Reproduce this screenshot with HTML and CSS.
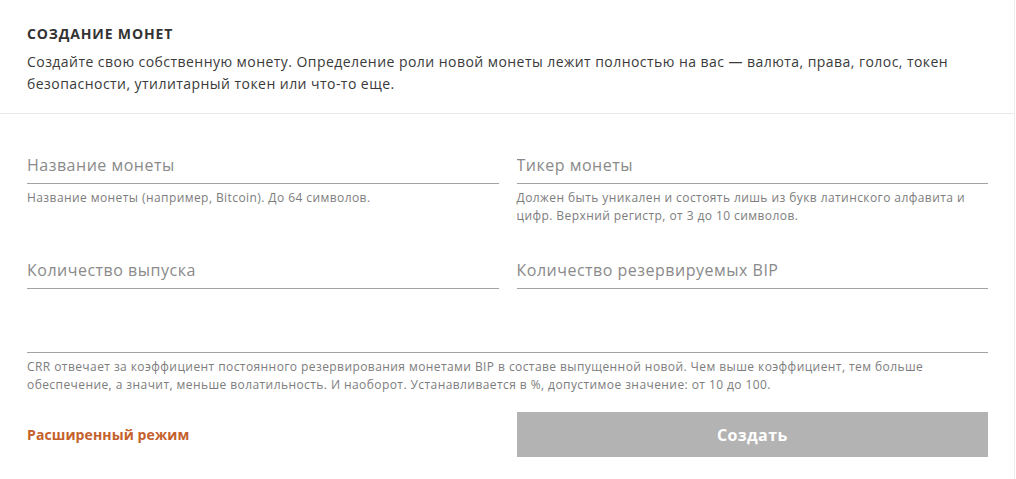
FILE: index.html
```html
<!DOCTYPE html>
<html lang="ru">
<head>
    <meta charset="UTF-8">
    <meta name="viewport" content="width=device-width, initial-scale=1.0">
    <title>Создание монет</title>
    <link rel="stylesheet" href="styles.css">
</head>
<body>
    <div class="panel">
        <header class="panel-head">
            <h1>Создание монет</h1>
            <p>Создайте свою собственную монету. Определение роли новой монеты лежит полностью на вас — валюта, права, голос, токен безопасности, утилитарный токен или что-то еще.</p>
        </header>

        <form class="coin-form" onsubmit="return false">
            <div class="field">
                <input class="field-input" type="text" placeholder="Название монеты">
                <div class="field-help">Название монеты (например, Bitcoin). До 64 символов.</div>
            </div>
            <div class="field">
                <input class="field-input" type="text" placeholder="Тикер монеты">
                <div class="field-help">Должен быть уникален и состоять лишь из букв латинского алфавита и цифр. Верхний регистр, от 3 до 10 символов.</div>
            </div>
            <div class="field">
                <input class="field-input" type="text" placeholder="Количество выпуска">
            </div>
            <div class="field">
                <input class="field-input" type="text" placeholder="Количество резервируемых BIP">
            </div>
            <div class="field field-wide">
                <input class="field-input" type="text">
                <div class="field-help">CRR отвечает за коэффициент постоянного резервирования монетами BIP в составе выпущенной новой. Чем выше коэффициент, тем больше обеспечение, а значит, меньше волатильность. И наоборот. Устанавливается в %, допустимое значение: от 10 до 100.</div>
            </div>
            <div class="form-actions">
                <a class="advanced-link" href="#">Расширенный режим</a>
                <button class="submit-button" type="submit" disabled>Создать</button>
            </div>
        </form>
    </div>
</body>
</html>
```

FILE: styles.css
```css
body {
    margin: 0;
    padding: 0;
    background-color: #fff;
    font-family: "Open Sans", "Noto Sans", sans-serif;
    color: #333;
}
.panel {
    width: 1014px;
    min-height: 479px;
    border-right: 1px solid #ececec;
}
.panel-head {
    padding: 24px 27px 18px;
    border-bottom: 1px solid #e8e8e8;
}
.panel-head h1 {
    margin: 0 0 7px;
    font-size: 14px;
    line-height: 20px;
    font-weight: 700;
    text-transform: uppercase;
    letter-spacing: 0.85px;
    color: #333;
}
.panel-head p {
    margin: 0;
    font-size: 14px;
    line-height: 22px;
    letter-spacing: 0.45px;
    color: #3a3a3a;
}
.coin-form {
    display: grid;
    grid-template-columns: 1fr 1fr;
    column-gap: 18px;
    row-gap: 27px;
    padding: 33px 26px 0 27px;
}
.field-wide {
    grid-column: 1 / 3;
}
.field-input {
    display: block;
    width: 100%;
    box-sizing: border-box;
    height: 37px;
    padding: 0;
    border: none;
    border-bottom: 1px solid #a3a3a3;
    outline: none;
    background: transparent;
    font-family: inherit;
    font-size: 16px;
    letter-spacing: 0.5px;
    color: #333;
}
.field-input::placeholder {
    color: #8a8a8a;
}
.field-help {
    margin-top: 5px;
    font-size: 12px;
    line-height: 18px;
    letter-spacing: 0.42px;
    color: #7d7d7d;
}
.form-actions {
    grid-column: 1 / 3;
    display: grid;
    grid-template-columns: 1fr 1fr;
    column-gap: 18px;
    align-items: center;
    margin-top: -9px;
}
.advanced-link {
    font-size: 14px;
    font-weight: 700;
    letter-spacing: 0.1px;
    color: #c4602b;
    text-decoration: none;
}
.submit-button {
    height: 45px;
    border: none;
    background-color: #b3b3b3;
    color: #fff;
    font-family: inherit;
    font-size: 16px;
    font-weight: 700;
    letter-spacing: 0.4px;
}
```
